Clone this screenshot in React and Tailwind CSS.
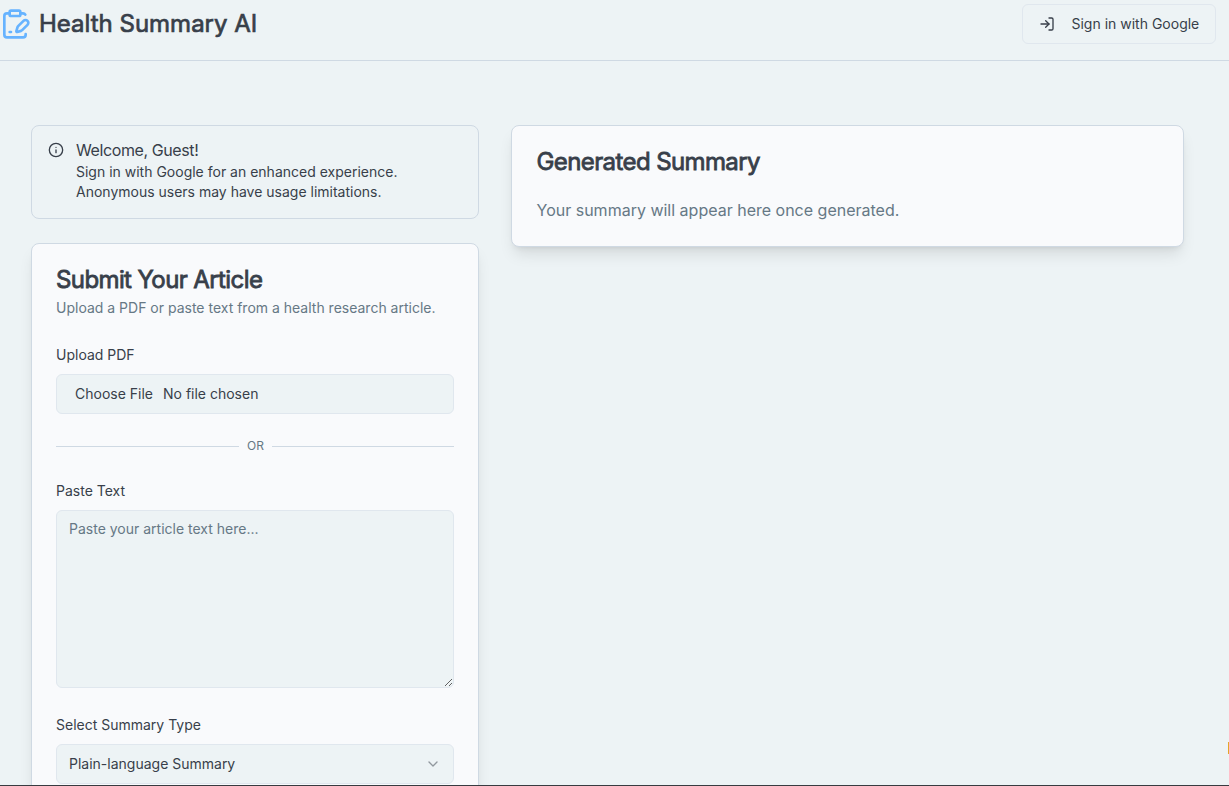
import { ChevronDown, ClipboardPenLine, Info, LogIn } from "lucide-react";

function Header() {
  return (
    <header className="flex h-[61px] shrink-0 items-start justify-between border-b border-[#cfd9e3] pr-[13px]">
      <div className="-ml-px flex h-12 items-center gap-2">
        <ClipboardPenLine className="size-8 text-[#66b3ff]" />
        <h1 className="text-2xl leading-8 font-normal text-[#383f4a] [-webkit-text-stroke:0.7px_#383f4a]">Health Summary AI</h1>
      </div>
      <button className="mt-1 flex h-10 w-[194px] items-center rounded-md border border-[#e0e7ee] px-4 text-sm whitespace-nowrap">
        <LogIn className="mr-[16.5px] size-4 shrink-0" />
        Sign in with Google
      </button>
    </header>
  );
}

function Welcome() {
  return (
    <div className="flex h-[94px] gap-3 rounded-lg border border-[#cfd9e3] p-4">
      <Info className="size-4 shrink-0" />
      <div>
        <h5 className="mb-1 text-base leading-4 tracking-tight">Welcome, Guest!</h5>
        <p className="text-sm leading-5">
          Sign in with Google for an enhanced experience.
          <br />
          Anonymous users may have usage limitations.
        </p>
      </div>
    </div>
  );
}

function ArticleForm() {
  return (
    <section className="h-[700px] rounded-lg border border-[#cfd9e3] bg-[#f9fafc] p-6 shadow-lg">
      <h2 className="text-2xl leading-6 font-normal tracking-tight text-[#383f4a] [-webkit-text-stroke:0.8px_#383f4a]">
        Submit Your Article
      </h2>
      <p className="mt-1.5 text-sm leading-5 text-[#667885]">
        Upload a PDF or paste text from a health research article.
      </p>

      <div className="mt-[30px] text-sm leading-3.5">Upload PDF</div>
      <div className="mt-3 flex h-10 items-center gap-2.5 rounded-md border border-[#e0e7ee] bg-[#edf3f5] px-[18px] text-sm">
        <span>Choose File</span>
        <span>No file chosen</span>
      </div>

      <div className="mt-6 flex h-4 items-center text-xs text-[#667885]">
        <div className="h-px w-[183px] bg-[#cfd9e3]" />
        <span className="w-[33px] text-center">OR</span>
        <div className="h-px flex-1 bg-[#cfd9e3]" />
      </div>

      <div className="mt-[30px] text-sm leading-3.5">Paste Text</div>
      <textarea
        className="mt-3 block h-[178px] w-full resize-y rounded-md border border-[#e0e7ee] bg-[#edf3f5] px-3 py-2 text-sm placeholder:text-[#667885]"
        placeholder="Paste your article text here..."
      />

      <div className="mt-[30px] text-sm leading-3.5">Select Summary Type</div>
      <button className="mt-3 flex h-10 w-full items-center justify-between rounded-md border border-[#e0e7ee] bg-[#edf3f5] px-3 text-sm">
        Plain-language Summary
        <ChevronDown className="size-4 opacity-50" />
      </button>
    </section>
  );
}

function SummaryCard() {
  return (
    <section className="h-[122px] rounded-lg border border-[#cfd9e3] bg-[#f9fafc] p-6 pl-[24.5px] shadow-lg">
      <h2 className="text-2xl leading-6 font-normal tracking-tight text-[#383f4a] [-webkit-text-stroke:0.8px_#383f4a]">
        Generated Summary
      </h2>
      <p className="mt-6 text-base leading-6 text-[#667885]">Your summary will appear here once generated.</p>
    </section>
  );
}

export default function App() {
  return (
    <div className="relative flex h-[786px] w-[1229px] flex-col overflow-hidden bg-[#edf3f5] font-['Inter',sans-serif] text-[#383f4a]">
      <Header />
      <main className="grid min-h-0 flex-1 grid-cols-[448px_673px] items-start gap-8 overflow-hidden pt-16 pl-[31px]">
        <div className="flex flex-col gap-6">
          <Welcome />
          <ArticleForm />
        </div>
        <SummaryCard />
      </main>
      <div className="h-px shrink-0 bg-[#383b40]" />
      <div className="absolute top-[742px] right-0 h-3 w-px bg-[#e5a52a]" />
    </div>
  );
}
